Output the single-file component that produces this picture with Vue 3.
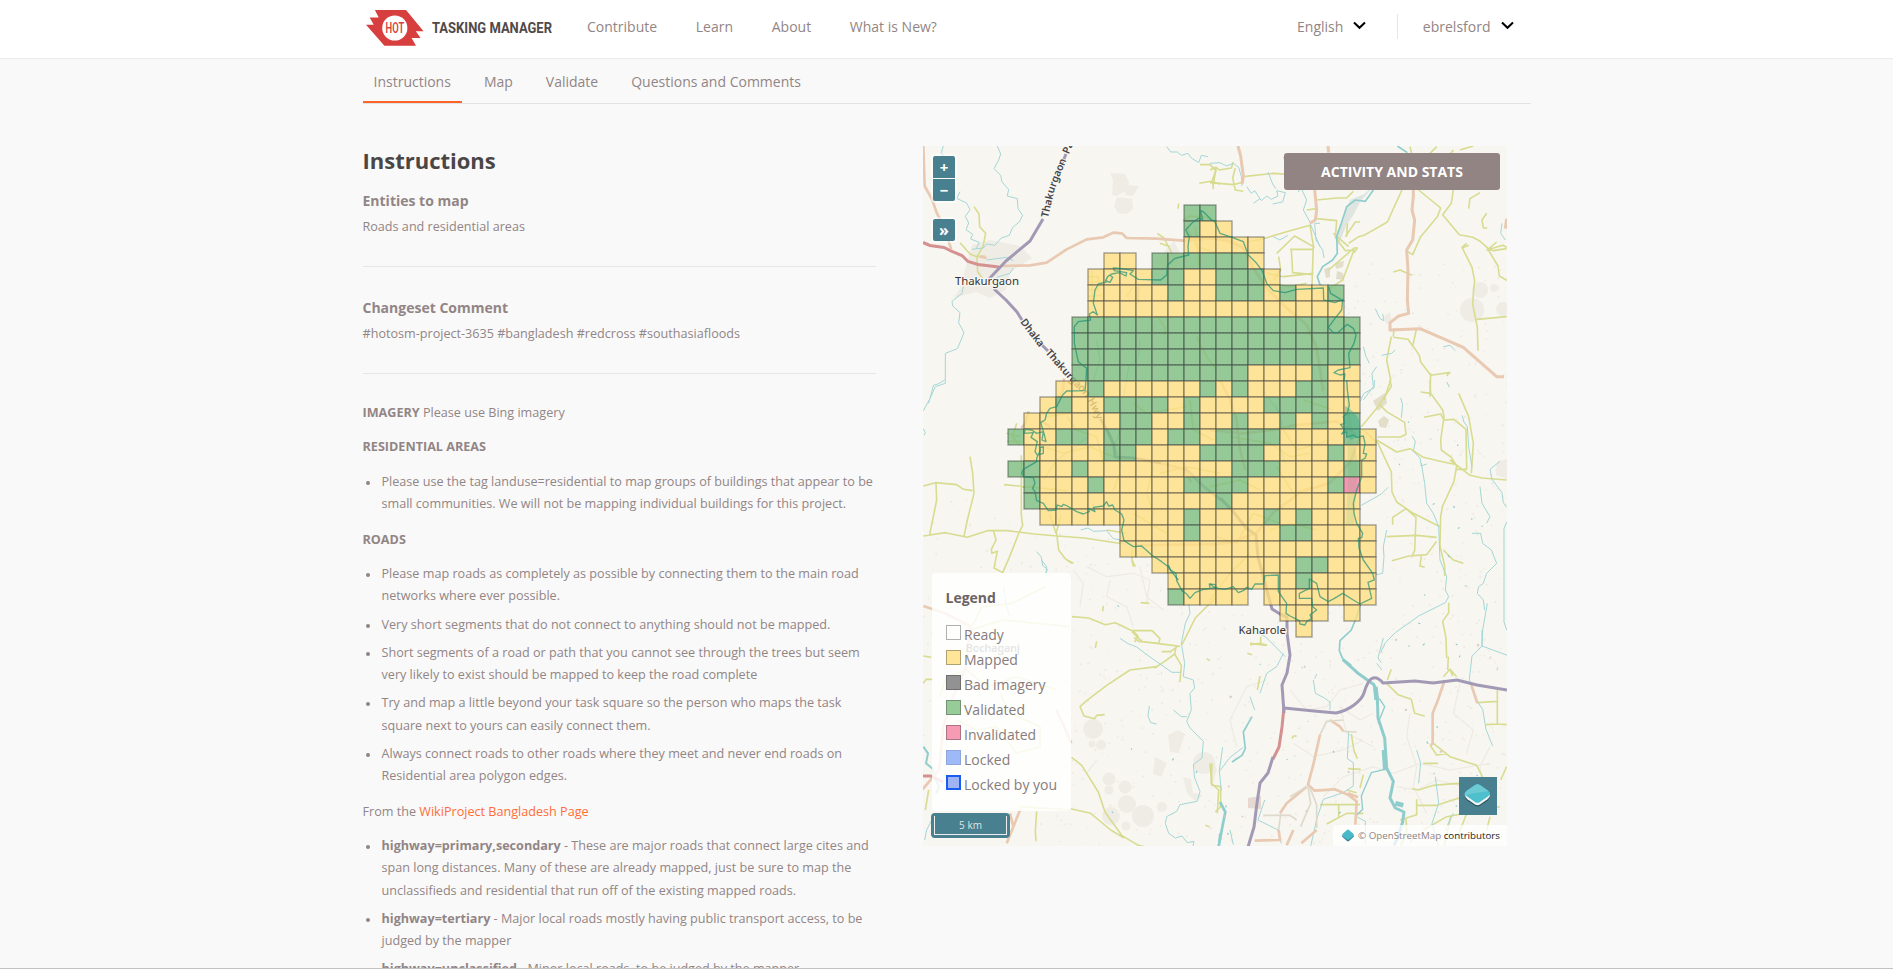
<script setup>
const navLinks = ['Contribute', 'Learn', 'About', 'What is New?']
const tabs = ['Instructions', 'Map', 'Validate', 'Questions and Comments']

const roadRules = [
  'Please map roads as completely as possible by connecting them to the main road networks where ever possible.',
  'Very short segments that do not connect to anything should not be mapped.',
  'Short segments of a road or path that you cannot see through the trees but seem very likely to exist should be mapped to keep the road complete',
  'Try and map a little beyond your task square so the person who maps the task square next to yours can easily connect them.',
  'Always connect roads to other roads where they meet and never end roads on Residential area polygon edges.',
]

const highways = [
  { tag: 'highway=primary,secondary', text: 'These are major roads that connect large cites and span long distances. Many of these are already mapped, just be sure to map the unclassifieds and residential that run off of the existing mapped roads.' },
  { tag: 'highway=tertiary', text: 'Major local roads mostly having public transport access, to be judged by the mapper' },
  { tag: 'highway=unclassified', text: 'Minor local roads, to be judged by the mapper' },
]

const legend = [
  { label: 'Ready', cls: 'ready' },
  { label: 'Mapped', cls: 'mapped' },
  { label: 'Bad imagery', cls: 'bad' },
  { label: 'Validated', cls: 'validated' },
  { label: 'Invalidated', cls: 'invalidated' },
  { label: 'Locked', cls: 'locked' },
  { label: 'Locked by you', cls: 'mine' },
]

// Task squares: y = mapped, g = validated, p = invalidated, . = outside the project
const rows = [
  '...........gg',
  '...........gyy',
  '...........yyyyy',
  '......yy.ggggggy',
  '.....yyyyggyygggy',
  '.....yyyyygyygggygyyg',
  '.....yyyyyyyyyyyyyyyy',
  '....gggggggggggggggggg',
  '....gggggggggggggggggg',
  '....gggggggggggggggggg',
  '....gggggggggggyyyygyy',
  '...yygyyyyyygygyyyggyy',
  '..ygyyggggygyyyyggggyy',
  '.yyyyyyggyygyygyygygyg',
  'gyyggygggyggyggggyyyygy',
  '.yyyyyggyyyyggggyyyygyy',
  'ggyygyyyyyyyyygggyyyygy',
  '.gyyygyyyyyggggyyyyygpy',
  '.gyyyyyyyyyyygyyyyyyyy',
  '..yyyyyyyyygyyyygygyyy',
  '.......yyyygyyyyyggyyyy',
  '.......yyyyyyyyyyyyyyyy',
  '.........yyyyyyyyyggyyy',
  '..........yyyyyyyygyyyy',
  '..........gyyyy.yyyyyyy',
  '.................yyy.y',
  '..................y',
]
const cells = []
rows.forEach((row, r) => {
  ;[...row].forEach((kind, c) => {
    if (kind !== '.') cells.push({ kind, x: 1008 + c * 16, y: 205 + r * 16, key: `${r}-${c}` })
  })
})

// Small ground details scattered over the base map
let seed = 7
const rnd = () => {
  seed = (seed * 16807) % 2147483647
  return seed / 2147483647
}
const blots = (n, x0, y0, w, h) =>
  Array.from({ length: n }, () => {
    const x = (x0 + rnd() * w).toFixed(1)
    const y = (y0 + rnd() * h).toFixed(1)
    return `M${x} ${y}l${(rnd() * 4 - 2).toFixed(1)} ${(rnd() * 4 - 2).toFixed(1)}`
  }).join('')
const specks = blots(420, 1335, 255, 172, 590) + blots(330, 1060, 555, 280, 290) + blots(130, 923, 500, 150, 346) + blots(200, 1085, 300, 270, 250)
const ponds = blots(26, 1380, 400, 125, 440) + blots(18, 1100, 570, 250, 270)
const sheds = blots(14, 1220, 640, 280, 190)
</script>

<template>
  <div class="page">
    <header class="top">
      <div class="wrap top-row">
        <a class="brand">
          <svg class="emblem" width="58" height="36" viewBox="0 0 58 36">
            <path d="M8.9 0H40L57.6 21.3H49.8L54.6 28H45.6L50 35.8H18.4L0 14.7H7.7L3.7 7.4H12.7Z" fill="#d73f3f" />
            <circle cx="28.8" cy="18" r="12.6" fill="#fff" />
            <text x="19.6" y="22.900" textLength="18.6" lengthAdjust="spacingAndGlyphs" font-family="Roboto, sans-serif" font-weight="600" font-size="14" fill="#d73f3f">HOT</text>
          </svg>
          <svg class="wordmark" width="121" height="18" viewBox="0 0 121 18">
            <text x="0" y="14" textLength="120" lengthAdjust="spacingAndGlyphs" font-family="Roboto, sans-serif" font-weight="700" font-size="14" fill="#514848">TASKING MANAGER</text>
          </svg>
        </a>
        <nav class="main-nav">
          <a v-for="l in navLinks" :key="l">{{ l }}</a>
        </nav>
        <div class="account">
          <span class="drop">English
            <svg width="13" height="9" viewBox="0 0 13 9"><path d="M1 1.500L6.500 6.800L12 1.500" fill="none" stroke="#000" stroke-width="2" /></svg>
          </span>
          <span class="divider"></span>
          <span class="drop">ebrelsford
            <svg width="13" height="9" viewBox="0 0 13 9"><path d="M1 1.500L6.500 6.800L12 1.500" fill="none" stroke="#000" stroke-width="2" /></svg>
          </span>
        </div>
      </div>
    </header>

    <div class="wrap tabs">
      <a v-for="(t, i) in tabs" :key="t" :class="{ active: i === 0 }">{{ t }}</a>
    </div>

    <main class="wrap columns">
      <section class="text">
        <h1>Instructions</h1>
        <div class="block">
          <h2>Entities to map</h2>
          <p>Roads and residential areas</p>
        </div>
        <div class="block">
          <h2>Changeset Comment</h2>
          <p>#hotosm-project-3635 #bangladesh #redcross #southasiafloods</p>
        </div>
        <div class="prose">
          <p><strong>IMAGERY</strong> Please use Bing imagery</p>
          <p><strong>RESIDENTIAL AREAS</strong></p>
          <ul>
            <li>Please use the tag landuse=residential to map groups of buildings that appear to be small communities. We will not be mapping individual buildings for this project.</li>
          </ul>
          <p><strong>ROADS</strong></p>
          <ul>
            <li v-for="r in roadRules" :key="r">{{ r }}</li>
          </ul>
          <p>From the <a>WikiProject Bangladesh Page</a></p>
          <ul>
            <li v-for="h in highways" :key="h.tag"><strong>{{ h.tag }}</strong> - {{ h.text }}</li>
          </ul>
        </div>
      </section>

      <section class="map">
        <svg class="canvas" width="584" height="700" viewBox="923 146 584 700">
          <rect x="923" y="146" width="584" height="700" fill="#f7f6f1" />
          <path :d="specks" class="speck" />

          <!-- built-up areas -->
          <g fill="#efece5">
            <circle cx="1093" cy="729" r="10" /><circle cx="1101" cy="745" r="5" /><circle cx="1092" cy="744" r="3.500" />
            <circle cx="1109" cy="779" r="6.500" /><circle cx="1125" cy="787" r="6.500" /><circle cx="1109" cy="790" r="4.500" />
            <circle cx="1127" cy="804" r="9" /><circle cx="1111" cy="816" r="9" /><circle cx="1143" cy="816" r="11" />
            <circle cx="1126" cy="826" r="4.500" /><circle cx="1204" cy="763" r="11" /><circle cx="1162" cy="807" r="5" />
            <circle cx="1472" cy="310" r="12" /><circle cx="1480" cy="290" r="8" /><circle cx="1494" cy="288" r="4" /><circle cx="1503" cy="309" r="7" />
            <path d="M1110 173l15 1 4 8-2 8-10 6-5-1 1-15zM1126 185l13 1-6 10-8-1zM1117 197l15 2 1 10-6 5-9-1-4-7z" />
            <path d="M1154 263l20-22 6 12-4 18zM972 245l18-5 30 6 12 12-22 14-4 18-16 8-14-6-22 6 6-10z" />
            <path d="M1168 735l10-5 7 4-3 9-4 10-8-1zM1155 757l12 6-6 14-8-3zM1183 777l8 2 2 14 10 2-8 6-8-8z" />
            <path d="M1497 462l10-3v20l-11-4zM1210 755l7 14-4 14-3 2zM1384 316l6-4 2 10-6 2z" />
          </g>
          <path d="M1373 401l12-8 2 10-9 8zM1378 421l6-5 5 4-3 8-6-1zM1324 269l6-2v10l-4 1zM1335 263l9-2-1 6-7 2zM1337 271l6 2 1 7-8-1z" fill="#e2deca" />
          <path d="M1248 798l13-2v13l-13-1z" fill="#e6d9d2" />
          <path d="M1350 200l14-6 10-8-14 16-6 12-8 12-8 20-2-12z" fill="#dfe6e2" />

          <!-- minor tracks -->
          <g transform="translate(1210 630) scale(.33333)" class="track">
            <path d="M250 340l60 40 90 -20 60 -30M340 500l60 -60 90 -30 60 20 80 -30 90 20 120 -20M600 250l-10 70 30 90 -10 60 40 80M840 350l-30 60 10 70M490 350l-80 -40 -20 -80 60 40 40 -20M750 160l-20 90 60 50 -20 70M170 150l-60 20 -50 100 20 80M240 180l50 60 60 -10 40 -50 70 -20M560 470l60 10 60 -30 80 20" />
          </g>
          <g transform="translate(920 560) scale(.33333)" class="track">
            <path d="M500 20l60 30 80 -10 50 20 -10 70M570 60l-10 50 60 30 20 60M460 30l30 40 -10 70M660 20l20 90 50 40M500 640l30 -40" />
          </g>

          <!-- lanes -->
          <g class="lane">
            <g transform="translate(920 140) scale(.33333)">
              <path d="M162 200l15 22 2 38 18 20 -8 40 -18 30 2 45 16 22M120 308l30 34 20 8 25 -2M840 74l30 0 18 18 -10 25 2 30M838 130l35 -6 27 8M776 190l-2 16M712 280l20 14 24 46M790 240l20 -12 50 4 30 20M720 310l30 10M505 410l30 0 0 40 -28 0M508 425l36 0M516 392l0 95M504 470l40 -4" />
              <path d="M800 260l30 60 60 20 M826 260l12 120M830 590l30 60 30 40M716 535l20 30 -4 20M620 470l20 -30" />
            </g>
            <g transform="translate(1210 140) scale(.33333)">
              <path d="M0 90l18 -8 10 8 36 -6 6 -18M18 84l-8 50M0 128l70 6 30 -8M76 84l-8 30 8 36 24 4M100 110l90 -10 90 6 M160 296l80 -24 60 -16 M110 306l52 -10M300 256l10 60 -4 120M200 340l54 -52 60 34 M240 328l70 0M244 330l4 68 60 6M206 350l6 40 -20 30M290 210l28 -4M320 180l60 -6 30 0 20 -20M320 236l60 6 -4 50 30 40 26 -2 -34 90 -40 26M356 390l76 -66 10 0 -10 14M370 280l46 40M406 290l30 -44 14 0M412 250l-2 40M416 310l30 -20 16 -4 70 -40 50 -110" />
              <path d="M626 150l66 54 -10 26 -50 60 -24 54 -16 -10M550 396l20 -6 36 16M730 150l-6 40 -26 34 50 60 40 8 20 10 30 26 40 -12 12 6M830 326l20 6 40 -6M834 328l30 50 4 30 24 14M776 206l4 -30 30 -18M820 264l-4 -24 14 -20M820 264l12 0M770 310l-14 12 30 60 8 40 -4 40 -2 30 14 70 2 70M800 538l90 -8M776 316l-20 8M860 306l-30 26M550 590l2 -25M550 592l44 6 14 20 12 -54M608 616l20 30 4 20 30 40 56 -8 -8 10M662 700l-2 70M544 590l-14 70 12 60 -20 60M750 30l40 -12M600 20l10 40M620 100l40 -60 20 -20M690 80l40 -50M170 400l50 10 90 -10M180 430l60 10 50 -10" />
            </g>
            <g transform="translate(920 380) scale(.33333)">
              <path d="M10 318l36 -10 64 6 20 14 28 4M48 310l2 50 -10 50 -12 58M150 230l8 50 4 60 -20 80 -10 50M10 468l66 -10 66 14 60 -20 60 0 80 10 70 6 80 6 120 18M220 450l8 30 -14 28 2 12 16 -6 -10 50 26 14 20 -46 30 -76 10 -20 -4 -30 0 -180M290 130l-12 40 20 26M260 160l40 10M262 184l40 0M252 314l190 18M388 400l20 60 16 -54M410 460l6 50 20 26 20 14M636 510l0 30 10 20M360 90l20 20 70 -10M370 200l60 20 80 -20 70 30M370 300l40 -60M440 110l30 40 60 20 20 80M640 70l40 30 120 -20M700 260l-20 80 20 60 -10 40M720 280l80 -20 100 20M810 60l10 90 60 30M580 330l20 -50M640 400l100 60M560 450l60 10" />
            </g>
            <g transform="translate(1210 380) scale(.33333)">
              <path d="M540 0l4 20 -40 60 -50 60M510 75l20 20 54 32 4 36 -16 8 -70 0M460 150l44 40 40 86 2 60 14 30 50 34 80 40M500 180l60 36 40 -10 40 26 50 12 50 10M660 0l2 40 36 50 4 20 -10 70 2 30 30 22 16 26 -8 46 -34 74 -6 30 -2 90 14 60 0 30M632 36l30 4M642 112l50 -10 10 18 30 -2 36 30 2 120 -30 0M746 40l30 70 14 80 -6 90M720 240l60 46 36 8 74 6M548 434l0 -22 40 -26 30 26 -4 100 -10 20M530 470l90 -4 60 6M546 542l50 -14 54 -4 30 -40M634 528l-4 30 14 4M700 510l30 30 30 10M716 668l0 30 -18 26 10 50 2 60M120 794l30 -4 20 6M152 770l0 24M60 170l120 20 60 40 60 -10M20 470l60 20 50 -90 80 30M200 260l50 80 60 -20M0 320l90 -20 60 30M180 450l60 -20 80 20M0 660l60 -80 60 -60M220 150l40 60 100 -30M280 60l90 30" />
            </g>
            <g transform="translate(920 560) scale(.33333)">
              <path d="M456 170l50 4 50 20 30 -6 50 24 60 0 24 24 -4 14 -60 -6 -14 -12M640 214l14 14 -10 18M636 215l30 30 50 6 64 8M725 275l26 0 20 -14M786 254l40 -80 60 -60M768 262l-4 20 -30 22 -30 20M764 282l20 34 -4 50M710 320l-80 10 -70 46 -60 46 -20 18 12 28 32 8 6 -10 24 -2M455 592l30 24 50 80 20 60 50 70 50 30 20 4M452 746l60 14 60 50 40 24M350 754l-4 60 2 30M10 288l24 4M10 370l8 -12 20 0M16 750l10 -60M550 138l-2 16M530 244l-4 20M662 128l26 2M876 610l-2 60 22 20 -4 70M300 740l150 10M440 0l20 10M636 0l4 20M860 296l10 6M856 796l12 4" />
              <path d="M156 200l30 -60 90 -10 100 -50M150 210l100 -30 200 20M60 410l20 -60 60 -20 60 50 90 -30 120 40M110 480l60 30 60 -10 60 80 70 -20 0 -60 -90 -40 -30 -60" />
            </g>
            <g transform="translate(1210 630) scale(.33333)">
              <path d="M142 180l8 -42M112 70l14 4M120 40l50 6M532 150l12 -32M530 160l34 34 40 14 10 42 30 8M700 140l20 -22 8 20M715 80l-2 40M740 140l-20 -22M800 218l62 -4 0 -34M862 214l0 68 28 2M828 284l34 -2M246 326l4 -8 10 0M424 312l8 50 10 24M414 416l38 2M460 434l-10 40M660 345l20 30 30 -4M670 340l50 40 80 26 20 40M606 476l20 4 44 -14 70 -6 20 2M620 526l60 0 60 -20 40 -6M570 570l50 -16 0 -46M570 650l20 -40 -2 -46M350 582l60 -32 50 0M330 524l120 0M386 524l0 40M0 400l6 66 26 4 0 60 -16 16M722 560l-20 90M770 550l-30 80M640 600l70 -40 160 -30M840 560l-10 40M872 450l18 -40M640 400l44 0M410 480l30 8" />
            </g>
          </g>

          <!-- streams -->
          <g class="stream">
            <g transform="translate(920 140) scale(.33333)">
              <path d="M232 18l10 24 -6 18 -14 26 20 20 4 20 20 22 -4 20 30 8 2 30 14 20 -10 20 -20 16 -10 24 -24 8 -20 22 -24 -4 -10 12 -34 4M120 155l-10 20 30 14 10 20 -14 20 10 20 -8 20 20 14 -6 14 26 10 -10 20M130 440l-4 20 -30 24 2 14 22 20 -4 30 16 30 -12 30 -8 18 -36 14 0 90 -30 10 -18 40 -2 10M740 20l12 16 20 0 12 10 20 -6 10 14 22 14 8 -22 20 4M70 18l-6 20 10 16M280 384l-10 16 -40 12M200 360l60 -8 20 10M530 600l10 60 -20 60M660 600l-4 50 -30 30 -14 90" />
            </g>
            <g transform="translate(1210 140) scale(.33333)">
              <path d="M0 70l30 -2 20 10 20 -8 16 12 8 28 2 28M110 140l14 20 10 -8 20 30 16 -14 14 10 20 -10 -4 -16 26 6 -8 28 -30 6M130 190l20 -14M174 96l14 36 10 14M220 50l20 50 4 24M290 130l-14 20 14 30 -10 30 20 36M264 156l8 -10M330 250l-16 0 4 50 20 30 4 24M190 290l20 10 24 -14M300 250l30 70M496 506l14 30 12 6 -4 -20M700 620l20 -4 16 16M460 620l8 30 10 20M500 680l-14 20 4 40 -30 40M555 630l-10 10 -30 6M710 726l8 16M876 250l-4 30 14 20" />
            </g>
            <g transform="translate(920 380) scale(.33333)">
              <path d="M74 0l-20 12 -14 4 -10 40 -20 36M10 146l6 12 -4 8M482 450l22 -6 16 10 40 -2 20 24 24 4M350 515l14 16 4 26 14 10 -4 14M600 60l4 80 -20 60 20 60M500 170l-30 30 -60 40" />
            </g>
            <g transform="translate(1210 380) scale(.33333)">
              <path d="M494 0l-2 24 -30 16 -12 24M572 54l6 20 -4 40M606 168l10 16 -6 30 20 20 4 24 16 -6M634 250l10 60 6 60 20 30 16 40 4 100 20 50 -4 40 10 20 -10 18 -80 40 -70 50 -30 30 -14 30M756 106l6 20 10 14 4 60 10 60M870 244l-30 24 6 30 30 40 4 30 10 14M810 320l6 50 24 40 -10 20M786 460l26 0 6 30 26 20 16 40 -30 30 -10 30 -14 10 -4 20 18 20 4 30M832 670l-14 80 -2 48M890 426l-8 20 0 280 8 24M530 450l-10 50 2 30 -4 50 -20 4M454 376l60 -34 20 -20M196 70l20 60 -10 60 20 60M160 30l40 60" />
            </g>
            <g transform="translate(920 560) scale(.33333)">
              <path d="M806 130l4 30 -14 30 -12 60 10 60 -4 40 30 10 4 24 -14 16 4 50 -14 34 10 20 40 40 -4 50 -26 20 4 40 16 40 -8 30 -52 10 -10 20 -30 16 -4 20 10 30 20 14 20 -6 16 20 20 -4 -4 20M600 235l24 16 26 10 40 30 66 46 26 0M688 438l-4 30 8 20 18 4M760 450l24 20 16 0M364 0l16 20 -2 20M250 80l10 60 10 30M40 770l-20 40 -6 30" />
            </g>
            <g transform="translate(1210 630) scale(.33333)">
              <path d="M314 146l6 -14 M310 150l6 40 24 12 20 14 0 24M220 70l-20 40 -30 20 -20 60M120 200l14 40M38 352l-10 70 6 60M100 352l-40 30 -30 40M126 0l40 20 60 60M816 0l0 48 76 28M816 48l-30 30 -8 70 20 60 20 30 10 60 20 50M520 24l-16 60 10 14M500 100l16 20M416 306l-4 80 18 12 0 70 -30 20 -60 20 -20 60 -20 90M620 360l12 40 -6 60M676 440l10 80 -20 60 20 70M164 510l-20 60 60 30 10 40M440 560l26 14 0 70M730 550l-20 40M60 600l10 44M600 640l20 -30" />
            </g>
          </g>

          <!-- rivers -->
          <g class="river">
            <g transform="translate(1210 140) scale(.33333)">
              <path d="M562 18l30 20M490 150l-24 34 -30 -4 -26 20 -16 50 -14 40 2 50 -14 20 -30 20 -16 30 8 24 20 8" stroke-width="5" />
            </g>
            <g transform="translate(1210 630) scale(.33333)">
              <path d="M450 -75l-10 35 -16 40 -34 32 -2 30 10 24 26 20M126 260l-26 46 6 50 -10 20 -30 20" stroke-width="5" />
              <path d="M398 88l44 40 50 36 10 40 2 60 20 60 6 90 20 40 -10 50 16 30 26 12 -4 30 -16 50 -10 20" stroke-width="9" />
              <path d="M496 170l4 40M522 360l4 60M556 520l24 6" stroke-width="14" />
              <path d="M524 418l-40 10 -30 70 4 40 -20 20M508 206l16 24 -20 50" stroke-width="4" />
              <path d="M30 516l16 30 -10 50 -10 54" stroke-width="8" />
            </g>
            <g transform="translate(920 560) scale(.33333)">
              <path d="M10 560l14 20 -6 30 20 16 4 24 16 30 -10 20M900 820l-4 38" stroke-width="6" />
            </g>
          </g>

          <path :d="ponds" class="pond" />
          <path :d="sheds" class="shed" />

          <!-- secondary roads -->
          <g class="secondary">
            <g transform="translate(920 140) scale(.33333)">
              <path d="M10 18l4 120 22 40 14 40 20 40 24 70M180 350l20 4M240 378l90 -2 50 -8 60 -40 60 -30 50 -6 30 -14 26 2 14 14 90 2 80 6 60 -4" />
              <path d="M432 715l-4 40 -20 36M656 440l-4 50M360 840l30 20" />
            </g>
            <g transform="translate(1210 140) scale(.33333)">
              <path d="M84 18l8 30 8 60 -4 24M354 18l2 20M314 150l6 60 -4 30 -16 10M610 150l0 20 -4 40 8 30 -6 60 -18 30 4 60 -2 90 4 40 -30 8 -26 20 0 22 90 -4 130 56 100 88 22 0M890 236l-4 30M-78 296l78 -2 60 10 40 20 30 60 40 60 60 60 60 50 30 70 20 130" stroke-width="9" />
            </g>
            <g transform="translate(1210 380) scale(.33333)">
              <path d="M0 494l60 -6 80 -30 50 -60 80 -60 90 -30 60 -60 30 -80M30 0l30 60 20 60 10 90 16 60M0 150l100 10 90 -10 60 -14 130 -12 60 40" stroke-width="8" />
            </g>
            <g transform="translate(920 380) scale(.33333)"><path d="M326 94l-12 40 -10 10M700 244l94 24 20 40M650 496l250 -4" stroke-width="8" /></g>
            <g transform="translate(920 560) scale(.33333)"><path d="M10 138l70 24 70 36 -10 120 -40 90 -30 90 -12 130 -50 60M300 750l-20 50M270 760l10 40 -20 50M410 450l44 100" /></g>
            <g transform="translate(1210 630) scale(.33333)">
              <path d="M330 314l-20 90 -16 60 20 18 60 -4 40 16 26 20 -4 70M360 270l30 20 10 14M704 150l-20 60 -16 40 0 90 -6 6M784 165l18 54M290 470l-60 50 -20 30M206 600l4 30 -76 2M250 600l-20 46M320 600l-46 40M414 490l30 12" />
            </g>
          </g>
          <g transform="translate(1210 630) scale(.33333)" class="double">
            <path d="M400 270l-50 4 -20 40M400 304l40 2M294 470l8 50 -30 70M300 474l20 50 0 70M160 556l80 0 20 14M212 550l-6 50M290 470l-50 30" />
          </g>

          <!-- trunk roads -->
          <g class="primary">
            <path d="M923 242.500l7 3 14 2 8 4 10 4 6 6 10 3 21 2.500" />
            <path d="M1284 707l-2 20-3 20-6 12" />
            <path d="M923 776h8l12 6" />
          </g>
          <g class="trunk">
            <path d="M1043 219l-13 22-24 20-17 18M994 289l12 11 11 12 5 8M1062 164l4-10M1041 344l7 7M1100 418l8 14 6 13 1 12 18 1 28 5" />
            <path d="M1220 498l12 12 14 18 10 7 2 22 8 30 6 22 8 5 7 3v16l3 22-3 18-5 12 2 28M1273 757l-5 16-8 10-3 20-3 24-6 20" />
            <path d="M1284 708l30 3 22 2q10-2 18-8t10-12q4-14 9-15t10 5l16-1 16-1 18 2 24-3 20 5 30 5" />
          </g>
          <path d="M1185 468l18 18 18 14" class="trunk" opacity=".7" />

          <!-- place and road names -->
          <defs>
            <path id="hwyNorth" d="M1048 218L1054 192Q1059 177 1065 164L1083 120" />
            <path id="hwySouthA" d="M1020 322L1039 347" />
            <path id="hwySouthB" d="M1045 353L1062 372Q1073 385 1080 391Q1088 399 1096 418L1100 430" />
          </defs>
          <g class="road-name">
            <text><textPath href="#hwyNorth" startOffset="0">Thakurgaon</textPath></text>
            <text><textPath href="#hwyNorth" startOffset="67">Panch</textPath></text>
            <text><textPath href="#hwySouthA">Dhaka</textPath></text>
            <text><textPath href="#hwySouthB">Thakurgaon Hwy</textPath></text>
          </g>
          <g class="place">
            <text x="955" y="285" textLength="64">Thakurgaon</text>
            <text x="1238.500" y="634" textLength="47.500">Kaharole</text>
            <text x="965.500" y="652" textLength="54.500" font-weight="600" opacity=".75">Bochaganj</text>
          </g>

          <!-- task grid -->
          <rect v-for="c in cells" :key="c.key" :x="c.x" :y="c.y" width="16" height="16" :class="['cell', c.kind]" />

          <!-- project boundary along the rivers -->
          <g class="edge">
            <g transform="translate(920 140) scale(.33333)">
              <path d="M872 237L850 215L842 212L848 238L835 235L815 250L797 270L808 290L804 320L806 345L765 355L743 375L740 405L722 420L655 418L630 402L640 392L605 386L580 384L583 392L620 398L618 408L598 398L575 402L563 410L557 422L570 427L578 412L568 404M565 424L535 432L525 450L520 490L532 525L520 515L508 522L512 540L475 545L463 560L463 610L475 665L500 685L498 720" />
            </g>
            <g transform="translate(920 380) scale(.33333)">
              <path d="M498 0L495 32L440 33L428 45L410 80L390 85L380 100L375 120L362 128L372 160L378 185L366 180L370 155L350 160L335 150L315 148L314 160L340 158L333 172L352 185L345 215L352 225L370 220L370 200L358 204M362 208L350 235L350 245L310 268L305 280L312 290L340 293L345 310L338 325L345 335L350 362L370 370L385 392L408 390L412 375L425 380L430 373L442 378L470 395L490 402L508 395L505 385L525 395L520 382L550 378L560 365L566 378L578 375L585 390L605 402L612 420L605 450L612 482L640 500L665 498L695 525L725 545L745 560L752 572L775 600" />
            </g>
            <g transform="translate(920 560) scale(.33333)">
              <path d="M745 15L752 30L768 40L770 62L786 92L800 102L810 115L825 98L850 88L870 85L868 72L886 74L888 82L872 85" />
            </g>
            <g transform="translate(1210 380) scale(.33333)">
              <path d="M410 0L412 30L418 75L412 100L400 110L404 130L392 134L404 150L395 162L410 155L410 172L430 165L440 172L460 168L465 190L460 220L470 222L465 235L455 240L455 290L440 330L430 370L432 400L440 430L458 460L455 473L445 475L447 505L460 540L488 580L493 600L474 607L485 655L450 672L430 660L398 640L372 656L355 665L330 650L320 610L298 597L298 625L268 640L268 655L305 655L308 680L320 690L300 705L305 715L290 725L285 735L270 732L268 722L240 708L228 700L230 670L205 635L205 585L165 587L160 612L135 612L125 628L110 622L100 632L85 638L70 620L45 628L25 625L10 620L0 612" />
            </g>
            <g transform="translate(1210 140) scale(.33333)">
              <path d="M0 237L14 244L30 280L66 292L100 305L115 345L140 370L158 395L170 430L190 452L225 458L260 448L340 444L341 480L375 488L398 478L395 510L375 535L355 562L370 578L385 577L412 553L430 565L438 585L432 610L416 640L420 683L385 690L372 698L390 705L405 702L402 722" />
              <path d="M356 440L362 460L392 478" />
            </g>
          </g>
          <path d="M1345 416q-4 14 6 24l9-4q4-20-15-30z" fill="#2ca58d" opacity=".4" />
          <path d="M1347 375l3 40 8 50-4 60-8 0 2-50 -1-60z" fill="#4aa56a" opacity=".12" />
        </svg>

        <div class="zoom-box"><button class="ctl first">+</button><button class="ctl last">−</button></div>
        <div class="expand-box"><button class="ctl single">»</button></div>
        <button class="stats">ACTIVITY AND STATS</button>

        <div class="legend">
          <h3>Legend</h3>
          <ul>
            <li v-for="l in legend" :key="l.label"><i :class="['swatch', l.cls]"></i>{{ l.label }}</li>
          </ul>
        </div>

        <div class="scale"><div>5 km</div></div>

        <div class="layers">
          <svg width="38" height="38" viewBox="0 0 38 38">
            <path d="M6 19h25q.3 2.500-2.500 4.800l-7.500 5q-2.500 1.500-5 0l-7.500-5q-2.800-2.300-2.500-4.800z" fill="#2c5262" />
            <path d="M6 17.500h25q.3 2.500-2.500 4.700l-7.500 5.200q-2.500 1.600-5 0l-7.500-5.200q-2.800-2.200-2.500-4.700z" fill="#f4f6f6" />
            <path d="M7.500 14l8.500-6q2.500-1.700 5 0l8.500 6q3 2.500 0 5l-8.500 6q-2.500 1.700-5 0l-8.500-6q-3-2.500 0-5z" fill="#4dbfcd" />
            <path d="M7.500 14l8.500-6q2.500-1.700 5 0l8.500 6q-4 1-10 1.500T6 18.500q-1.500-2 1.500-4.500z" fill="#6ccad5" />
          </svg>
        </div>

        <div class="attribution">
          <svg width="12" height="13" viewBox="0 0 12 13">
            <path d="M0 6.500h12q.2 1-1 1.900L7 12q-1 .8-2 0L1 8.400q-1.200-.9-1-1.900z" fill="#3d8394" />
            <path d="M1 4.500L5 1q1-.8 2 0l4 3.500q1.600 1.500 0 3L7 10.600q-1 .8-2 0L1 7.500q-1.600-1.500 0-3z" fill="#49b8c8" />
          </svg>
          <span>© OpenStreetMap <b>contributors</b></span>
        </div>
      </section>
    </main>
  </div>
</template>

<style>
body { margin: 0; background: #f9f9f9; }
</style>

<style scoped>
.page {
  box-sizing: border-box;
  height: 969px;
  overflow: hidden;
  background: #f9f9f9;
  border-bottom: 1px solid #c2c2c2;
  font-family: "Open Sans", sans-serif;
  font-size: 12.620px;
  color: #928585;
}
.wrap { width: 1168px; margin: 0 auto; }
.top { height: 58px; background: #fff; border-bottom: 1px solid #ebebeb; }
.top-row { display: flex; height: 52px; align-items: center; }
.brand { display: flex; align-items: center; padding-left: 3px; }
.emblem { margin-top: 3px; overflow: visible; }
.wordmark { margin: 4px 0 0 8px; overflow: visible; }
.main-nav { display: flex; gap: 38.700px; margin-left: 34.500px; font-size: 14px; }
.account { display: flex; align-items: center; margin-left: auto; margin-right: 17px; font-size: 14px; }
.drop { display: flex; align-items: center; gap: 10px; }
.drop svg { margin-top: -2px; }
.divider { width: 1px; height: 25px; margin: 0 25px 0 30.500px; background: #e6e6e6; }
.tabs { display: flex; gap: 11px; height: 44px; border-bottom: 1px solid #e3e3e3; font-size: 14px; }
.tabs a { box-sizing: border-box; height: 44px; padding: 0 11px; line-height: 46px; border-bottom: 2px solid transparent; }
.tabs a.active { border-color: #ff6429; }
.columns { display: flex; gap: 47.500px; align-items: flex-start; }
.text { flex: none; width: 513px; padding-top: 40px; }
h1 { margin: 0; font-size: 22px; line-height: 32px; color: #4a4646; font-weight: 700; }
h2 { margin: 0; font-size: 14px; line-height: 24px; font-weight: 700; }
.block { box-sizing: border-box; height: 91px; padding-top: 13px; border-bottom: 1px solid #e6e6e6; }
.block p { margin: 3px 0 0; line-height: 22px; }
.block + .block { height: 107px; padding-top: 29px; }
.prose { padding-top: 28px; line-height: 22.090px; }
.prose p { margin: 0 0 12.250px; }
.prose ul { margin: 0 0 13.900px; padding-left: 19px; list-style: none; }
.prose li { position: relative; margin-bottom: 6.300px; }
.prose li:last-child { margin-bottom: 0; }
.prose li::before { content: ""; position: absolute; left: -15.500px; top: 10px; width: 4px; height: 4px; border-radius: 2px; background: #928585; }
.prose a { color: #ff6d36; }

.map { position: relative; flex: none; width: 584px; height: 700px; margin-top: 42px; overflow: hidden; }
.canvas { display: block; }
.speck { fill: none; stroke: #eeebe3; stroke-width: 1.800; }
.pond { fill: none; stroke: #8ecbcc; stroke-width: 1.200; }
.shed { fill: none; stroke: #dccbcb; stroke-width: 2; }
.track { fill: none; stroke: #edeae1; stroke-width: 3.500; }
.lane { fill: none; stroke: #d8dc90; stroke-width: 4.800; stroke-linejoin: round; }
.stream { fill: none; stroke: #a4d6d6; stroke-width: 3; stroke-linejoin: round; }
.river { fill: none; stroke: #8fcdcd; stroke-linejoin: round; }
.secondary { fill: none; stroke: #e9c9b1; stroke-width: 8; stroke-linejoin: round; }
.double { fill: none; stroke: #dedacb; stroke-width: 5; }
.primary { fill: none; stroke: #d59190; stroke-width: 3; }
.trunk { fill: none; stroke: #a29ab5; stroke-width: 3; stroke-linejoin: round; }
.road-name text { font: 600 10.300px "Noto Sans", "Open Sans", sans-serif; fill: #45454a; stroke: #f7f6f1; stroke-width: 1.500px; paint-order: stroke; }
.place text { font-family: "Noto Sans", sans-serif; font-size: 11.500px; fill: #333; stroke: #f7f6f1; stroke-width: 2.500px; paint-order: stroke; }
.cell { stroke: #3c3c3c; stroke-opacity: .5; stroke-width: 1.300; }
.cell.y { fill: rgba(255, 223, 128, .78); }
.cell.g { fill: rgba(122, 188, 125, .78); }
.cell.p { fill: #f598b1; }
.edge { fill: none; stroke: #148a70; stroke-opacity: .65; stroke-width: 4; stroke-linejoin: round; }

.zoom-box, .expand-box { position: absolute; left: 8px; padding: 2px; background: rgba(255, 255, 255, .5); border-radius: 4px; }
.zoom-box { top: 8px; }
.expand-box { top: 71px; }
.ctl { display: block; width: 22px; height: 22px; padding: 0; border: 0; background: #48808f; color: #fff; font: 700 15px/20px "Open Sans", sans-serif; text-align: center; }
.ctl.first { border-radius: 2px 2px 0 0; margin-bottom: 1px; }
.ctl.last { border-radius: 0 0 2px 2px; }
.ctl.single { border-radius: 2px; font-size: 16px; line-height: 19px; }
.stats { position: absolute; left: 361px; top: 7px; width: 216px; height: 37px; padding: 0; border: 0; border-radius: 3px; background: #938484; color: #fff; font: 700 14px/37px "Open Sans", sans-serif; }
.legend { position: absolute; left: 9px; top: 427px; box-sizing: border-box; width: 139px; height: 238px; padding: 14px 0 0 13.500px; border-radius: 3px; background: rgba(255, 255, 255, .83); }
.legend h3 { margin: 0 0 13px; font-size: 14px; line-height: 22px; color: #6c6363; }
.legend ul { margin: 0; padding: 0; list-style: none; }
.legend li { display: flex; align-items: center; gap: 3.500px; height: 25px; font-size: 14px; color: #877c7c; white-space: nowrap; }
.swatch { box-sizing: border-box; width: 15px; height: 15px; margin-top: -4px; border: 1px solid rgba(60, 60, 60, .4); flex: none; }
.ready { background: rgba(255, 255, 255, .3); }
.mapped { background: #fee597; }
.bad { background: #929292; }
.validated { background: #97cb98; }
.invalidated { background: #f79ab3; }
.locked { background: #9fb9f8; border-color: #8fa6dc; }
.mine { background: #9fb4f5; border: 2px solid #1a5cf0; }
.scale { position: absolute; left: 8px; top: 667px; box-sizing: border-box; width: 79px; height: 25px; padding: 3px; border-radius: 4px; background: #48808f; }
.scale div { box-sizing: border-box; height: 19px; border: 1px solid #eee; border-top: 0; color: #dfe6e8; font-size: 10px; line-height: 18px; text-align: center; }
.layers { position: absolute; left: 536px; top: 631px; width: 38px; height: 38px; background: #48808f; }
.layers svg { display: block; }
.attribution { position: absolute; right: 0; bottom: 0; box-sizing: border-box; width: 174px; height: 21px; padding: 0 7px 0 9px; display: flex; align-items: center; justify-content: space-between; background: rgba(255, 255, 255, .75); border-radius: 3px 0 0 0; font-size: 9.750px; color: #928585; white-space: nowrap; }
.attribution b { font-weight: 400; color: #222; }
</style>
